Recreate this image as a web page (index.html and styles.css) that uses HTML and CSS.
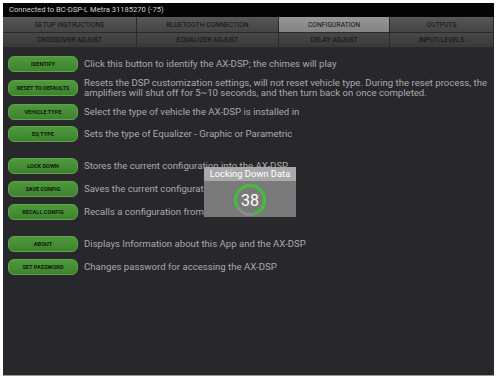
FILE: index.html
```html
<!DOCTYPE html>
<html>
<head>
<meta charset="utf-8">
<link rel="stylesheet" href="styles.css">
</head>
<body>
<div class="frame">
  <div class="status">Connected to BC-DSP-L Metra 31185270 (-75)</div>
  <div class="tabs">
    <div class="tab">SETUP INSTRUCTIONS</div>
    <div class="tab">BLUETOOTH CONNECTION</div>
    <div class="tab active">CONFIGURATION</div>
    <div class="tab">OUTPUTS</div>
    <div class="tab row2">CROSSOVER ADJUST</div>
    <div class="tab row2">EQUALIZER ADJUST</div>
    <div class="tab row2">DELAY ADJUST</div>
    <div class="tab row2">INPUT/LEVELS</div>
  </div>
  <div class="content">
    <div class="group g1">
      <div class="row"><div class="btn">IDENTIFY</div><div class="desc">Click this button to identify the AX-DSP; the chimes will play</div></div>
      <div class="row tall"><div class="btn">RESET TO DEFAULTS</div><div class="desc">Resets the DSP customization settings, will not reset vehicle type. During the reset process, the amplifiers will shut off for 5~10 seconds, and then turn back on once completed.</div></div>
      <div class="row"><div class="btn">VEHICLE TYPE</div><div class="desc">Select the type of vehicle the AX-DSP is installed in</div></div>
      <div class="row"><div class="btn">EQ TYPE</div><div class="desc">Sets the type of Equalizer - Graphic or Parametric</div></div>
    </div>
    <div class="group">
      <div class="row"><div class="btn">LOCK DOWN</div><div class="desc">Stores the current configuration into the AX-DSP</div></div>
      <div class="row"><div class="btn">SAVE CONFIG</div><div class="desc">Saves the current configuration to a file</div></div>
      <div class="row"><div class="btn">RECALL CONFIG</div><div class="desc">Recalls a configuration from a file</div></div>
    </div>
    <div class="group">
      <div class="row"><div class="btn">ABOUT</div><div class="desc">Displays Information about this App and the AX-DSP</div></div>
      <div class="row"><div class="btn">SET PASSWORD</div><div class="desc">Changes password for accessing the AX-DSP</div></div>
    </div>
  </div>
  <div class="modal">
    <div class="modal-title">Locking Down Data</div>
    <div class="modal-body">
      <div class="ring">
        <svg width="34" height="34" viewBox="0 0 34 34">
          <circle cx="17" cy="17" r="14.5" fill="none" stroke="#8c8c8c" stroke-width="3"/>
          <circle cx="17" cy="17" r="14.5" fill="none" stroke="#3fbf3a" stroke-width="3" stroke-dasharray="72 91.1" transform="rotate(150 17 17)"/>
        </svg>
        <span class="num">38</span>
      </div>
    </div>
  </div>
</div>
</body>
</html>
```

FILE: styles.css
```css
html, body {
  margin: 0;
  padding: 0;
  background: #ffffff;
}
body {
  font-family: Roboto, "Noto Sans", Arial, sans-serif;
}
.frame {
  position: relative;
  margin: 3px 0 0 3px;
  width: 491px;
  height: 373px;
  background: #28282c;
  border-bottom: 1px solid #9a9a9a;
  box-sizing: border-box;
  overflow: hidden;
}
.status {
  height: 14px;
  background: #050505;
  color: #cfcfcf;
  font-size: 7.6px;
  line-height: 14px;
  padding-left: 6px;
}
.tabs {
  display: grid;
  grid-template-columns: 134px 142px 111px 1fr;
  grid-template-rows: 16px 15px;
}
.tab {
  display: flex;
  align-items: center;
  justify-content: center;
  background: linear-gradient(#575757, #444444);
  color: #101010;
  font-size: 6.8px;
  border-right: 1px solid #2a2a2a;
  border-bottom: 1px solid #2a2a2a;
  box-sizing: border-box;
}
.tab.row2 {
  background: linear-gradient(#484848, #393939);
}
.tab.active {
  background: linear-gradient(#979797, #838383);
}
.content {
  padding: 8px 0 0 5px;
  display: flex;
  flex-direction: column;
  gap: 16px;
}
.group {
  display: flex;
  flex-direction: column;
  gap: 7px;
}
.group.g1 {
  gap: 6px;
}
.row {
  display: flex;
  align-items: center;
  min-height: 16px;
}
.row.tall {
  min-height: 20px;
}
.btn {
  flex: none;
  width: 70px;
  height: 16px;
  box-sizing: border-box;
  border: 1px solid #5ea447;
  border-radius: 6px;
  background: linear-gradient(#4e9a3b, #3e8230);
  color: #0e180a;
  font-size: 5.6px;
  font-weight: 700;
  display: flex;
  align-items: center;
  justify-content: center;
  white-space: nowrap;
}
.desc {
  margin-left: 6px;
  color: #a9a9ab;
  font-size: 9.6px;
  line-height: 10px;
  padding-right: 4px;
}
.modal {
  position: absolute;
  left: 201px;
  top: 164px;
  width: 92px;
  height: 50px;
  background: #7a7a7a;
  display: flex;
  flex-direction: column;
}
.modal-title {
  height: 14px;
  background: #a9a9a9;
  color: #ffffff;
  font-size: 9.4px;
  line-height: 14px;
  text-align: center;
}
.modal-body {
  flex: 1;
  display: flex;
  align-items: center;
  justify-content: center;
}
.ring {
  position: relative;
  width: 34px;
  height: 34px;
  margin-top: 2px;
}
.ring svg {
  display: block;
}
.num {
  position: absolute;
  inset: 0;
  display: flex;
  align-items: center;
  justify-content: center;
  color: #ffffff;
  font-size: 16px;
}
```
